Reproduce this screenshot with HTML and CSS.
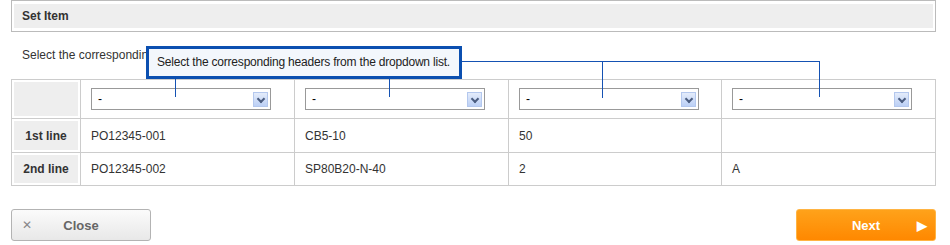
FILE: index.html
```html
<!DOCTYPE html>
<html lang="en">
<head>
  <meta charset="UTF-8">
  <title>Set Item</title>
  <link rel="stylesheet" href="styles.css">
</head>
<body>
  <div class="panel">
    <div class="section-head">
      <h2 class="section-title">Set Item</h2>
    </div>

    <p class="desc">Select the corresponding headers from the dropdown list.</p>

    <table class="items">
      <colgroup>
        <col class="c-label">
        <col class="c-data">
        <col class="c-data">
        <col class="c-data3">
        <col>
      </colgroup>
      <tr class="head-row">
        <th class="label"></th>
        <td><div class="dropdown"><span>-</span><span class="arrow"></span></div></td>
        <td><div class="dropdown"><span>-</span><span class="arrow"></span></div></td>
        <td><div class="dropdown"><span>-</span><span class="arrow"></span></div></td>
        <td><div class="dropdown"><span>-</span><span class="arrow"></span></div></td>
      </tr>
      <tr class="row1">
        <th class="label">1st line</th>
        <td>PO12345-001</td>
        <td>CB5-10</td>
        <td>50</td>
        <td></td>
      </tr>
      <tr class="row2">
        <th class="label">2nd line</th>
        <td>PO12345-002</td>
        <td>SP80B20-N-40</td>
        <td>2</td>
        <td>A</td>
      </tr>
    </table>

    <div class="actions">
      <button class="btn btn-close"><span class="ico">&#x2715;</span><span>Close</span><span></span></button>
      <button class="btn btn-next"><span></span><span>Next</span><span class="ico">&#x25B6;</span></button>
    </div>
  </div>

  <!-- help callout over the dropdowns -->
  <svg class="callout-lines" width="950" height="110" viewBox="0 0 950 110">
    <g stroke="#1552b3" stroke-width="1" fill="none">
      <path d="M462 61.5H820"/>
      <path d="M175.5 78V97"/>
      <path d="M389.5 78V97"/>
      <path d="M602.5 61V98"/>
      <path d="M819.5 61V97"/>
    </g>
  </svg>
  <div class="callout">Select the corresponding headers from the dropdown list.</div>
</body>
</html>
```

FILE: styles.css
```css
body {
  margin: 0;
  font-family: "Liberation Sans", Arial, sans-serif;
  font-size: 12px;
  color: #333;
  background: #fff;
  position: relative;
}
.panel {
  margin: 0 14px 0 11px;
}
.section-head {
  border: 1px solid #bbb;
  padding: 3px 2px;
}
.section-title {
  margin: 0;
  background: #eee;
  height: 24px;
  line-height: 24px;
  padding-left: 8px;
  font-size: 12px;
  font-weight: bold;
  color: #333;
}
.desc {
  margin: 0;
  padding: 14px 11px 15px;
  line-height: 18px;
}
.items {
  width: 100%;
  border-collapse: collapse;
  table-layout: fixed;
}
.c-label { width: 69px; }
.c-data { width: 214px; }
.c-data3 { width: 213px; }
.items th,
.items td {
  border: 1px solid #ccc;
  padding: 0 10px;
  text-align: left;
  font-weight: normal;
}
.items .label {
  padding: 0;
  background: #eee;
  box-shadow: inset 0 0 0 2px #fff;
  text-align: center;
  font-weight: bold;
  color: #333;
}
.head-row { height: 39px; }
.row1 { height: 34px; }
.row2 { height: 33px; }
.dropdown {
  display: flex;
  align-items: center;
  justify-content: space-between;
  width: 180px;
  height: 22px;
  box-sizing: border-box;
  border: 1px solid #999;
  padding: 0 2px 0 6px;
  color: #000;
  background: #fff;
}
.arrow {
  width: 15px;
  height: 15px;
  box-sizing: border-box;
  border: 1px solid #b4c8ee;
  background: linear-gradient(#e4ecfb, #bcd0f5);
  position: relative;
}
.arrow::after {
  content: "";
  position: absolute;
  left: 4px;
  top: 3px;
  width: 4px;
  height: 4px;
  border-right: 2px solid #4b5d80;
  border-bottom: 2px solid #4b5d80;
  transform: rotate(45deg);
}
.actions {
  display: flex;
  justify-content: space-between;
  margin-top: 23px;
}
.btn {
  display: grid;
  grid-template-columns: 16px 1fr 16px;
  align-items: center;
  width: 140px;
  height: 32px;
  padding: 0 8px;
  border-radius: 3px;
  font-family: "Liberation Sans", Arial, sans-serif;
  font-size: 13px;
  font-weight: bold;
  cursor: pointer;
}
.btn-close {
  border: 1px solid #b3b3b3;
  background: linear-gradient(#fbfbfb, #e8e8e8);
  color: #666;
}
.btn-close .ico {
  font-size: 12px;
  font-weight: normal;
  color: #888;
  text-align: left;
  padding-left: 2px;
}
.btn-next {
  border: 1px solid #ffb443;
  background: linear-gradient(#ffa21a, #ff8800);
  color: #fff;
}
.btn-next .ico {
  font-size: 13px;
  text-align: right;
}
.callout-lines {
  position: absolute;
  left: 0;
  top: 0;
}
.callout {
  position: absolute;
  left: 146px;
  top: 46px;
  width: 316px;
  height: 33px;
  box-sizing: border-box;
  border: 3px solid #0b4fb0;
  background: #f3f7fc;
  padding: 0 8px;
  line-height: 27px;
  letter-spacing: -0.2px;
  color: #222;
  white-space: nowrap;
}
```
